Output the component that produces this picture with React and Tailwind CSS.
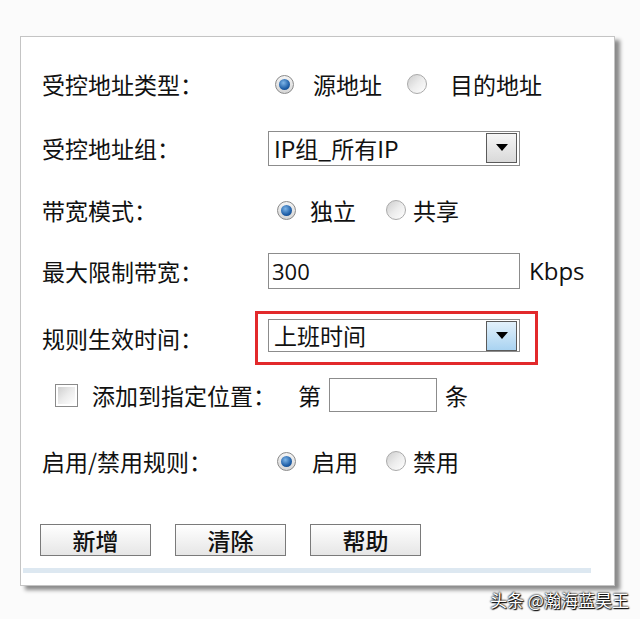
import React from "react";

const cjk = { fontFamily: '"Noto Sans CJK SC", "Noto Sans", sans-serif' };
const lat = { fontFamily: '"Open Sans", "Liberation Sans", sans-serif' };

function Radio({ checked }) {
  return checked ? (
    <span className="inline-flex h-[19px] w-[19px] items-center justify-center rounded-full border border-[#8a8a8a] bg-gradient-to-b from-[#f4f4f4] to-[#d6d6d6]">
      <span className="h-[11px] w-[11px] rounded-full bg-[radial-gradient(circle_at_40%_35%,#7fb6e8,#1f5fa8_60%,#0e3d78)]" />
    </span>
  ) : (
    <span className="inline-flex h-[20px] w-[20px] items-center justify-center rounded-full border border-[#aaaaaa] bg-gradient-to-br from-[#cdcdcd] via-[#ececec] to-[#ffffff]" />
  );
}

function DropBtn({ blue }) {
  return (
    <span
      className={
        "flex h-[30px] w-[31px] items-center justify-center border border-[#5a5a5a] " +
        (blue
          ? "bg-gradient-to-b from-[#e3f1fb] to-[#a9d3f1]"
          : "bg-gradient-to-b from-[#f6f6f6] to-[#d9d9d9]")
      }
    >
      <svg width="12" height="8" viewBox="0 0 12 8">
        <path d="M0 0 L12 0 L6 7 Z" fill="#000" />
      </svg>
    </span>
  );
}

function Label({ children }) {
  return <div className="w-[226px] shrink-0 text-[23px] text-[#111]">{children}</div>;
}

function Btn({ children }) {
  return (
    <div className="flex h-[32px] w-[111px] items-center justify-center border border-[#7a7a7a] bg-gradient-to-b from-[#ffffff] to-[#e6e6e6] text-[23px] font-medium text-[#111]">
      {children}
    </div>
  );
}

export default function App() {
  return (
    <div className="relative h-[619px] w-[640px] bg-[#fbfbfb]" style={cjk}>
      <div className="ml-[20px] pt-[36px]">
        <div className="flex h-[550px] w-[595px] flex-col border border-[#c4c4c4] bg-white pl-[21px] shadow-[5px_4px_4px_rgba(0,0,0,0.45)]">
          {/* row 1 */}
          <div className="mt-[29px] flex h-[36px] items-center">
            <Label>受控地址类型：</Label>
            <div className="flex items-center text-[23px] text-[#111]">
              <span className="ml-[7px] flex"><Radio checked /></span>
              <span className="ml-[19px]">源地址</span>
              <span className="ml-[25px] flex"><Radio /></span>
              <span className="ml-[23px]">目的地址</span>
            </div>
          </div>
          {/* row 2 */}
          <div className="mt-[28px] flex h-[36px] items-center">
            <Label>受控地址组：</Label>
            <div className="flex h-[35px] w-[252px] items-center justify-between border border-[#8c8c8c] pl-[5px] pr-[2px] text-[23px] text-[#111]">
              <span>IP组_所有IP</span>
              <DropBtn />
            </div>
          </div>
          {/* row 3 */}
          <div className="mt-[26px] flex h-[36px] items-center">
            <Label>带宽模式：</Label>
            <div className="flex items-center text-[23px] text-[#111]">
              <span className="ml-[9px] flex"><Radio checked /></span>
              <span className="ml-[14px]">独立</span>
              <span className="ml-[30px] flex"><Radio /></span>
              <span className="ml-[7px]">共享</span>
            </div>
          </div>
          {/* row 4 */}
          <div className="mt-[25px] flex h-[36px] items-center">
            <Label>最大限制带宽：</Label>
            <div className="flex h-[36px] w-[252px] items-center border border-[#8c8c8c] pl-[3px] text-[22px] text-[#111]" style={lat}>
              300
            </div>
            <span className="ml-[9px] text-[24px] text-[#111]" style={lat}>Kbps</span>
          </div>
          {/* row 5 */}
          <div className="mt-[22px] flex h-[54px] items-center">
            <Label>规则生效时间：</Label>
            <div className="ml-[-13px] h-[54px] w-[283px] border-[3px] border-[#e2292b] pl-[10px] pt-[5px]">
              <div className="flex h-[33px] w-[252px] items-center justify-between border border-[#8c8c8c] pl-[5px] pr-[2px] text-[23px] text-[#111]">
                <span>上班时间</span>
                <DropBtn blue />
              </div>
            </div>
          </div>
          {/* row 6 */}
          <div className="mt-[12px] flex h-[36px] items-center text-[23px] text-[#111]">
            <span className="ml-[13px] flex h-[23px] w-[23px] items-center justify-center border border-[#8a8a8a] bg-white">
              <span className="h-[17px] w-[17px] bg-gradient-to-br from-[#cfcfcf] via-[#ececec] to-[#ffffff]" />
            </span>
            <span className="ml-[14px]">添加到指定位置：</span>
            <span className="ml-[22px]">第</span>
            <span className="ml-[8px] h-[34px] w-[108px] border border-[#8c8c8c]" />
            <span className="ml-[8px]">条</span>
          </div>
          {/* row 7 */}
          <div className="mt-[30px] flex h-[36px] items-center">
            <Label>启用/禁用规则：</Label>
            <div className="flex items-center text-[23px] text-[#111]">
              <span className="ml-[9px] flex"><Radio checked /></span>
              <span className="ml-[16px]">启用</span>
              <span className="ml-[28px] flex"><Radio /></span>
              <span className="ml-[7px]">禁用</span>
            </div>
          </div>
          {/* buttons */}
          <div className="ml-[-2px] mt-[45px] flex gap-[24px]">
            <Btn>新增</Btn>
            <Btn>清除</Btn>
            <Btn>帮助</Btn>
          </div>
          <div className="ml-[-19px] mt-[12px] h-[5px] w-[568px] bg-[#dde8f1]" />
        </div>
      </div>
      <div className="absolute left-[490px] top-[587px] text-[17px] text-white [text-shadow:0_0_2px_#000,0_0_2px_#000,1px_1px_1px_#000]">
        头条 @瀚海蓝昊王
      </div>
    </div>
  );
}
